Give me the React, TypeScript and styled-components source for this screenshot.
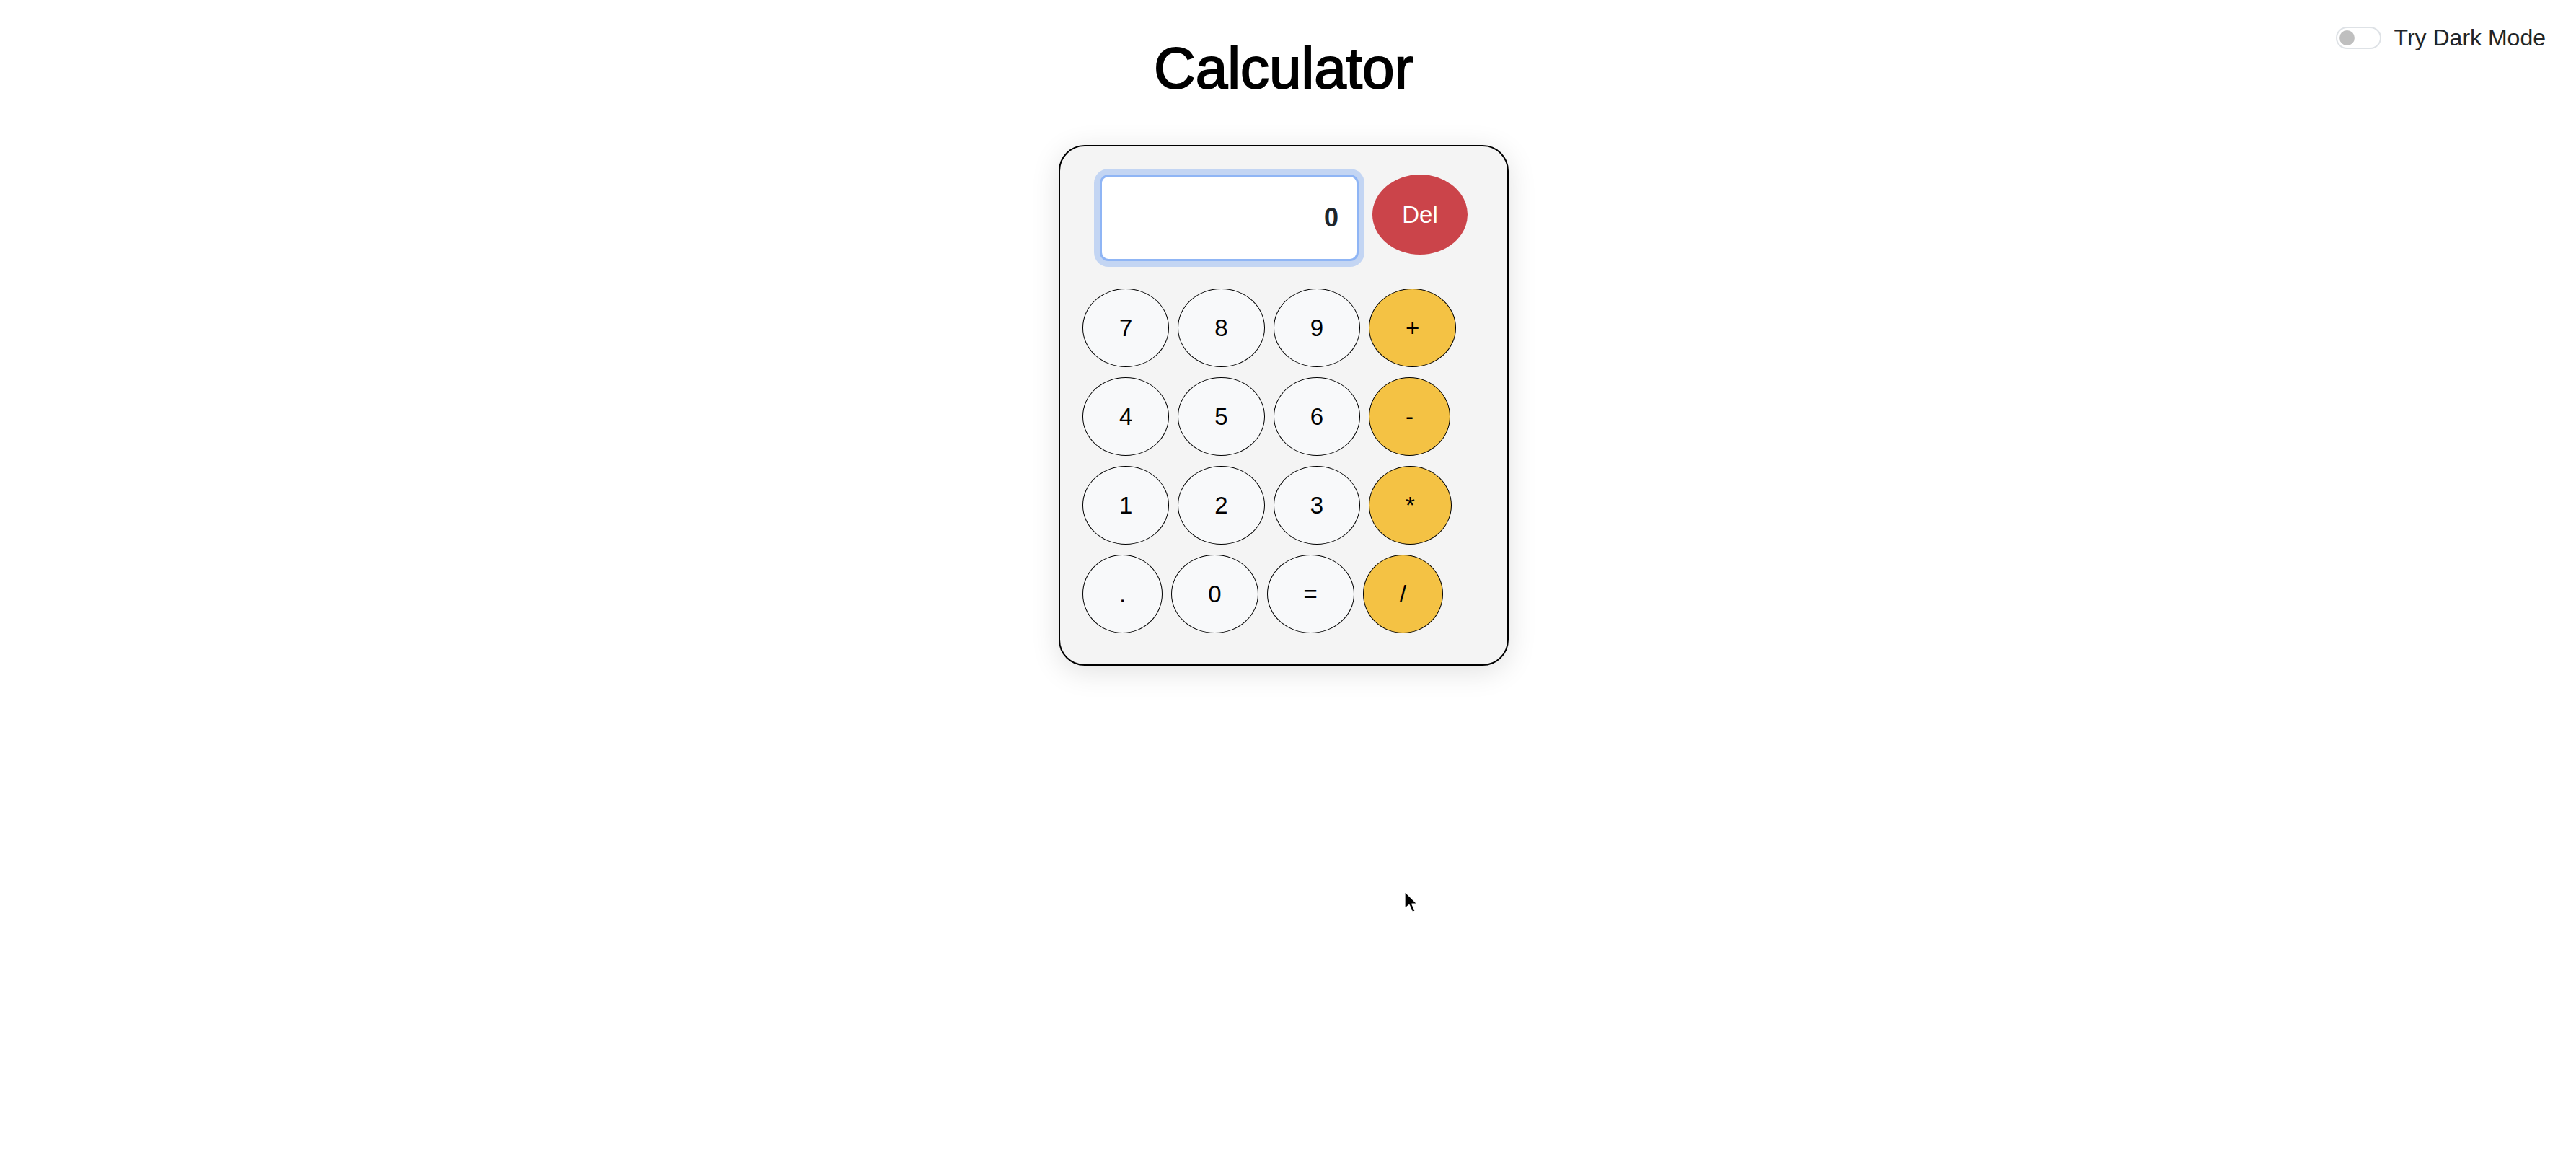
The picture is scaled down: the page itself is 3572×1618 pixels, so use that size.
import * as React from "react";
import styled, { createGlobalStyle } from "styled-components";

const GlobalStyle = createGlobalStyle`
  html, body {
    margin: 0;
    padding: 0;
    background: #fff;
    font-family: "Liberation Sans", Arial, sans-serif;
    color: #000;
  }
`;

const keys: { label: string; op?: boolean }[][] = [
  [{ label: "7" }, { label: "8" }, { label: "9" }, { label: "+", op: true }],
  [{ label: "4" }, { label: "5" }, { label: "6" }, { label: "-", op: true }],
  [{ label: "1" }, { label: "2" }, { label: "3" }, { label: "*", op: true }],
  [{ label: "." }, { label: "0" }, { label: "=" }, { label: "/", op: true }],
];

const App = () => {
  return (
    <Page>
      <GlobalStyle />
      <ThemeSwitch>
        <SwitchTrack>
          <SwitchKnob />
        </SwitchTrack>
        <SwitchLabel>Try Dark Mode</SwitchLabel>
      </ThemeSwitch>
      <Title>Calculator</Title>
      <Card>
        <DisplayRow>
          <Display>0</Display>
          <DelButton>Del</DelButton>
        </DisplayRow>
        <Keypad>
          {keys.map((row, i) => (
            <KeyRow key={i}>
              {row.map((k) => (
                <Key key={k.label} $op={k.op}>
                  {k.label}
                </Key>
              ))}
            </KeyRow>
          ))}
        </Keypad>
      </Card>
      <Cursor viewBox="0 0 14 22" width="22" height="34">
        <path
          d="M1 1 L1 17 L5 13.5 L8 20 L10.6 18.8 L7.7 12.5 L12.5 12.5 Z"
          fill="#000"
          stroke="#fff"
          strokeWidth="1.2"
          strokeLinejoin="round"
        />
      </Cursor>
    </Page>
  );
};

const Page = styled.div`
  position: relative;
  box-sizing: border-box;
  min-height: 1618px;
  padding-right: 12px;
  display: flex;
  flex-direction: column;
  align-items: center;
`;

const ThemeSwitch = styled.div`
  position: absolute;
  top: 36px;
  right: 42px;
  display: flex;
  align-items: center;
  gap: 18px;
`;

const SwitchTrack = styled.div`
  box-sizing: border-box;
  width: 63px;
  height: 31px;
  border: 2px solid #dee2e6;
  border-radius: 16px;
  background: #fff;
  display: flex;
  align-items: center;
  padding-left: 3px;
`;

const SwitchKnob = styled.div`
  width: 21px;
  height: 21px;
  border-radius: 50%;
  background: #bfbfbf;
`;

const SwitchLabel = styled.span`
  font-size: 32px;
  line-height: 32px;
  color: #212529;
`;

const Title = styled.h1`
  margin: 49px 0 0;
  font-size: 80px;
  line-height: 92px;
  font-weight: 400;
  color: #000;
  -webkit-text-stroke: 2px #000;
`;

const Card = styled.div`
  box-sizing: border-box;
  margin-top: 60px;
  width: 624px;
  height: 722px;
  padding: 39px 31px 0;
  background: #f4f4f4;
  border: 2px solid #000;
  border-radius: 36px;
  box-shadow: 0 8px 40px rgba(0, 0, 0, 0.12);
  display: flex;
  flex-direction: column;
`;

const DisplayRow = styled.div`
  display: flex;
  justify-content: center;
  align-items: flex-start;
  gap: 19px;
`;

const Display = styled.div`
  box-sizing: border-box;
  width: 359px;
  height: 120px;
  background: #fff;
  border: 3px solid #8fb5f5;
  border-radius: 12px;
  box-shadow: 0 0 0 8px #c3d5f3;
  display: flex;
  align-items: center;
  justify-content: flex-end;
  padding: 0 25px;
  font-size: 36px;
  font-weight: 700;
  color: #212529;
`;

const DelButton = styled.button`
  box-sizing: border-box;
  height: 111px;
  width: 132px;
  padding: 0;
  border: none;
  border-radius: 50%;
  background: #cb444a;
  color: #fff;
  font-family: "Liberation Sans", Arial, sans-serif;
  font-size: 33px;
`;

const Keypad = styled.div`
  margin-top: 38px;
  display: flex;
  flex-direction: column;
  gap: 14px;
`;

const KeyRow = styled.div`
  display: flex;
  gap: 12px;
`;

const Key = styled.button<{ $op?: boolean }>`
  box-sizing: border-box;
  height: 109px;
  padding: 0 50px;
  border: 1.5px solid #000;
  border-radius: 50%;
  background: ${(p) => (p.$op ? "#f4c244" : "#f8f9fa")};
  color: #000;
  font-family: "Liberation Sans", Arial, sans-serif;
  font-size: 33px;
`;

const Cursor = styled.svg`
  position: absolute;
  left: 1946px;
  top: 1234px;
`;

export default App;
